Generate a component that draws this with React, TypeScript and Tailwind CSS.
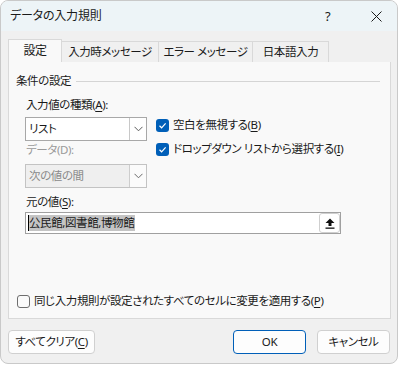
import React from "react";

const font = "[font-family:'Noto_Sans','Noto_Sans_CJK_JP',sans-serif] [font-feature-settings:'palt']";

function Check({ checked }: { checked: boolean }) {
  if (checked)
    return (
      <span className="w-[13px] h-[13px] rounded-[3px] bg-[#005fb8] flex items-center justify-center shrink-0">
        <svg width="9" height="9" viewBox="0 0 9 9">
          <path d="M1.5 4.8 L3.6 6.8 L7.6 2.4" stroke="white" strokeWidth="1.2" fill="none" />
        </svg>
      </span>
    );
  return <span className="w-[13px] h-[13px] rounded-[3px] border border-[#6e6e6e] bg-[#fafafa] shrink-0" />;
}

function Chevron({ color = "#5c5c5c" }: { color?: string }) {
  return (
    <svg width="9" height="6" viewBox="0 0 9 6">
      <path d="M0.5 0.8 L4.5 4.8 L8.5 0.8" stroke={color} strokeWidth="1" fill="none" />
    </svg>
  );
}

function U({ c }: { c: string }) {
  return <span className="underline underline-offset-2">{c}</span>;
}

export default function App() {
  return (
    <div className={`w-[400px] h-[365px] bg-white text-[11.5px] tracking-[-0.4px] leading-[16px] text-[#1a1a1a] ${font}`}>
      <div className="w-[398px] h-[364px] border border-[#c9c9c9] rounded-[8px] overflow-hidden bg-[#f0f0f0] flex flex-col">
        {/* Title bar */}
        <div className="h-[30px] bg-[#edf4f7] flex items-center pl-[9px] shrink-0">
          <span className="flex-1 text-[12px] tracking-[-0.2px]">データの入力規則</span>
          <span className="text-[13px] w-[12px] mr-[34px] text-[#1a1a1a]">?</span>
          <svg width="11" height="11" viewBox="0 0 11 11" className="mr-[15px]">
            <path d="M0.5 0.5 L10.5 10.5 M10.5 0.5 L0.5 10.5" stroke="#1a1a1a" strokeWidth="1" />
          </svg>
        </div>
        {/* Body */}
        <div className="px-[7px] pt-[8px] flex flex-col">
          {/* Tabs */}
          <div className="flex items-end h-[23px]">
            <div className="w-[54px] h-[23px] bg-[#f9f9f9] border border-[#d9d9d9] border-b-0 flex items-center justify-center text-[12px]">
              設定
            </div>
            <div className="w-[97px] h-[21px] border-t border-r border-[#d9d9d9] flex items-center justify-center">
              入力時メッセージ
            </div>
            <div className="w-[94px] h-[21px] border-t border-r border-[#d9d9d9] flex items-center justify-center">
              エラー メッセージ
            </div>
            <div className="w-[76px] h-[21px] border-t border-r border-[#d9d9d9] flex items-center justify-center">
              日本語入力
            </div>
          </div>
          {/* Panel */}
          <div className="w-[383px] h-[257px] bg-[#f9f9f9] border border-[#d9d9d9] border-t-0 flex flex-col">
            <div className="flex items-center pl-[7px] mt-[11px] h-[16px]">
              <span>条件の設定</span>
              <div className="flex-1 h-px bg-[#d5d5d5] ml-[5px] mr-[10px]" />
            </div>
            <div className="pl-[17px] mt-[8px] h-[16px]">
              入力値の種類(<U c="A" />):
            </div>
            <div className="flex pl-[16px] mt-[4px]">
              <div className="flex flex-col">
                <div className="w-[122px] h-[24px] border border-[#a8a8a8] bg-white flex">
                  <span className="flex-1 pl-[3px] flex items-center">リスト</span>
                  <span className="w-[17px] border-l border-[#c8c8c8] flex items-center justify-center">
                    <Chevron />
                  </span>
                </div>
                <div className="pl-[1px] mt-[1px] h-[16px] text-[#9a9a9a]">データ(D):</div>
                <div className="w-[122px] h-[24px] border border-[#c3c3c3] bg-[#efefef] flex mt-[6px]">
                  <span className="flex-1 pl-[3px] flex items-center text-[#8a8a8a]">次の値の間</span>
                  <span className="w-[17px] border-l border-[#cdcdcd] bg-[#fbfbfb] flex items-center justify-center">
                    <Chevron color="#6a6a6a" />
                  </span>
                </div>
              </div>
              <div className="flex flex-col ml-[9px] gap-[8px]">
                <div className="flex items-center h-[16px] gap-[4px]">
                  <Check checked />
                  <span>
                    空白を無視する(<U c="B" />)
                  </span>
                </div>
                <div className="flex items-center h-[16px] gap-[4px]">
                  <Check checked />
                  <span>
                    ドロップダウン リストから選択する(<U c="I" />)
                  </span>
                </div>
              </div>
            </div>
            <div className="pl-[17px] mt-[6px] h-[16px]">
              元の値(<U c="S" />):
            </div>
            <div className="ml-[16px] mt-[2px] w-[316px] h-[22px] border border-[#a0a0a0] bg-white flex items-center">
              <span className="ml-[2px] h-[16px] border-l border-black bg-[#c4c4c4] pr-[1px]">公民館,図書館,博物館</span>
              <span className="flex-1" />
              <span className="w-[21px] h-[20px] border border-[#cfcfcf] rounded-[3px] bg-white flex items-center justify-center">
                <svg width="10" height="11" viewBox="0 0 10 11">
                  <path d="M5 0.5 L9.5 5 L6.5 5 L6.5 8 L3.5 8 L3.5 5 L0.5 5 Z" fill="#111" />
                  <rect x="0.5" y="9.5" width="9" height="1.3" fill="#111" />
                </svg>
              </span>
            </div>
            <div className="flex items-center pl-[8px] mt-[59px] h-[16px] gap-[4px]">
              <Check checked={false} />
              <span>
                同じ入力規則が設定されたすべてのセルに変更を適用する(<U c="P" />)
              </span>
            </div>
          </div>
          {/* Buttons */}
          <div className="flex mt-[11px] h-[24px]">
            <button className="w-[87px] h-[24px] rounded-[4px] border border-[#d0d0d0] bg-[#fdfdfd] flex items-center justify-center">
              すべてクリア(<U c="C" />)
            </button>
            <span className="flex-1" />
            <button className="w-[73px] h-[24px] rounded-[4px] border border-[#005fb8] bg-[#fdfdfd] flex items-center justify-center">
              OK
            </button>
            <button className="w-[73px] h-[24px] ml-[11px] rounded-[4px] border border-[#d0d0d0] bg-[#fdfdfd] flex items-center justify-center">
              キャンセル
            </button>
          </div>
        </div>
      </div>
    </div>
  );
}
